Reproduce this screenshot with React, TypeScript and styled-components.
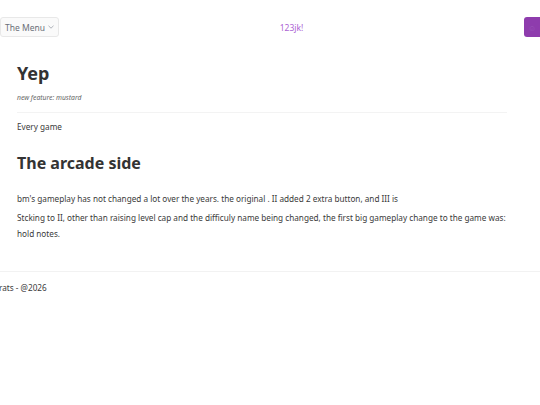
import React from "react";
import styled, { createGlobalStyle } from "styled-components";

const Global = createGlobalStyle`
  html, body { margin: 0; padding: 0; background: #fff; overflow: hidden; }
  body { font-family: "Noto Sans", "Open Sans", sans-serif; color: #333; }
`;

const Header = styled.header`
  display: flex;
  align-items: center;
  height: 20px;
  padding-top: 17px;
`;

const MenuButton = styled.button`
  display: flex;
  align-items: center;
  gap: 3px;
  height: 20px;
  width: 59px;
  padding: 0 0 0 4px;
  border: 1px solid #e8e8e8;
  border-radius: 3px;
  background: #fafafa;
  color: #6b6f78;
  font-family: "Noto Sans", sans-serif;
  font-size: 8.5px;
  box-sizing: border-box;
`;

const Brand = styled.div`
  flex: 1;
  text-align: center;
  color: #ad63d4;
  font-size: 8.5px;
`;

const SquareButton = styled.div`
  width: 16px;
  height: 20px;
  background: #8e3cad;
  border-radius: 3px 0 0 3px;
  display: flex;
  align-items: center;
  justify-content: center;
  color: #9a55b8;
  font-size: 8px;
`;

const Main = styled.main`
  padding: 0 17px 0 17px;
`;

const Title = styled.h1`
  margin: 0;
  padding-top: 23px;
  font-size: 18px;
  line-height: 26px;
  font-weight: 700;
  color: #333;
`;

const Note = styled.p`
  margin: 7px 0 0;
  font-size: 6.8px;
  line-height: 10px;
  font-style: italic;
  color: #666;
`;

const Rule = styled.hr`
  border: none;
  border-top: 1px solid #f3f3f3;
  margin: 9px 0 0;
  width: 490px;
`;

const Text = styled.p<{ $top?: number }>`
  margin: ${(p) => p.$top ?? 8}px 0 0;
  font-size: 8.2px;
  line-height: 16px;
  color: #3a3a3a;
`;

const SubTitle = styled.h2`
  margin: 16px 0 0;
  font-size: 16px;
  line-height: 24px;
  font-weight: 700;
  color: #333;
`;

const Footer = styled.footer`
  margin-top: 29px;
  border-top: 1px solid #f2f2f2;
  padding-top: 8px;
  font-size: 8.2px;
  line-height: 16px;
  color: #3a3a3a;
  margin-left: -1px;
`;

export default function App() {
  return (
    <>
      <Global />
      <Header>
        <MenuButton>
          The Menu
          <svg width="6" height="4" viewBox="0 0 6 4" fill="none">
            <path d="M0.5 0.8 L3 3.2 L5.5 0.8" stroke="#9aa0a8" strokeWidth="0.8" />
          </svg>
        </MenuButton>
        <Brand>123jk!</Brand>
        <SquareButton>☺</SquareButton>
      </Header>
      <Main>
        <Title>Yep</Title>
        <Note>new feature: mustard</Note>
        <Rule />
        <Text $top={6}>Every game</Text>
        <SubTitle>The arcade side</SubTitle>
        <Text $top={16}>
          bm's gameplay has not changed a lot over the years. the original . II added 2 extra button, and III is
        </Text>
        <Text $top={3}>
          Stcking to II, other than raising level cap and the difficuly name being changed, the first big gameplay
          change to the game was: hold notes.
        </Text>
      </Main>
      <Footer>rats - @2026</Footer>
    </>
  );
}
